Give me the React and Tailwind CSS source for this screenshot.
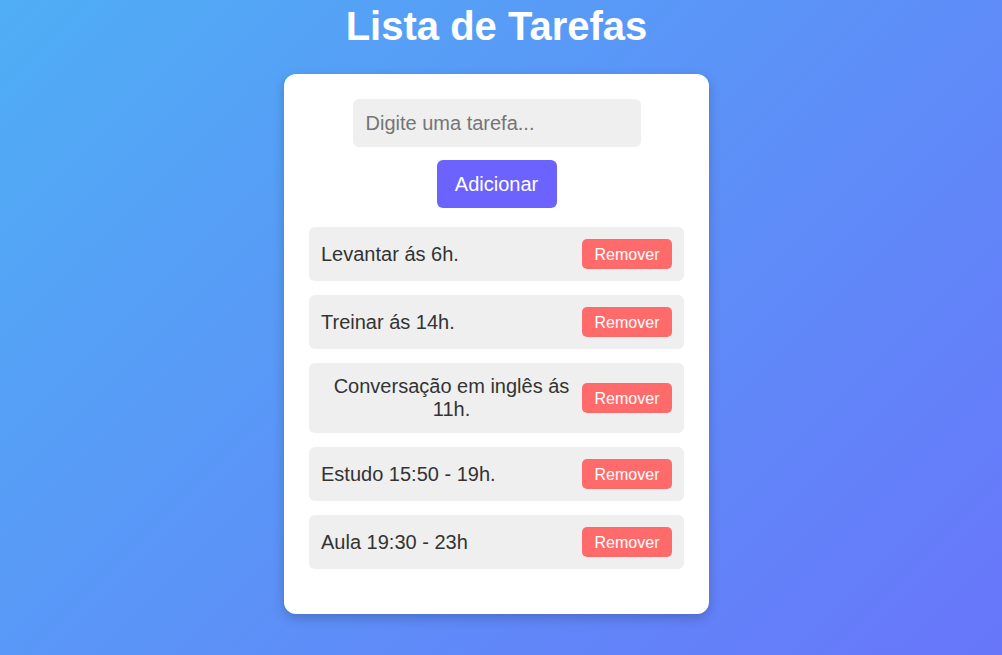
export default function App() {
  const tasks = [
    "Levantar ás 6h.",
    "Treinar ás 14h.",
    "Conversação em inglês ás 11h.",
    "Estudo 15:50 - 19h.",
    "Aula 19:30 - 23h",
  ];
  return (
    <div
      className="min-h-screen w-full bg-[linear-gradient(135deg,#4faef5,#6876fa)] flex flex-col items-center pt-[3px] pr-[9px]"
      style={{ fontFamily: '"Liberation Sans", Arial, sans-serif' }}
    >
      <h1 className="text-[40px] leading-[46px] font-bold text-white m-0 mb-[25px]">Lista de Tarefas</h1>
      <div className="w-[425px] bg-white rounded-[12px] p-[25px] pb-[45px] shadow-[0_4px_12px_rgba(0,0,0,0.2)] flex flex-col items-center text-center">
        <input
          type="text"
          placeholder="Digite uma tarefa..."
          className="w-[288px] h-[48px] bg-[#efefef] rounded-[6px] px-[13px] text-[20px] text-[#333] placeholder:text-[#757575] outline-none border-0"
        />
        <button className="mt-[13px] w-[120px] h-[48px] bg-[#6c63ff] text-white text-[20px] rounded-[6px]">
          Adicionar
        </button>
        <ul className="w-full mt-[19px] flex flex-col gap-[14px] list-none p-0 m-0">
          {tasks.map((t) => (
            <li
              key={t}
              className="flex items-center justify-between bg-[#efefef] rounded-[6px] p-[12px] text-[20px] leading-[23px] text-[#333]"
            >
              <span className="text-center">{t}</span>
              <button className="shrink-0 w-[90px] h-[30px] bg-[#ff6b6b] text-white text-[16px] rounded-[5px]">
                Remover
              </button>
            </li>
          ))}
        </ul>
      </div>
    </div>
  );
}
